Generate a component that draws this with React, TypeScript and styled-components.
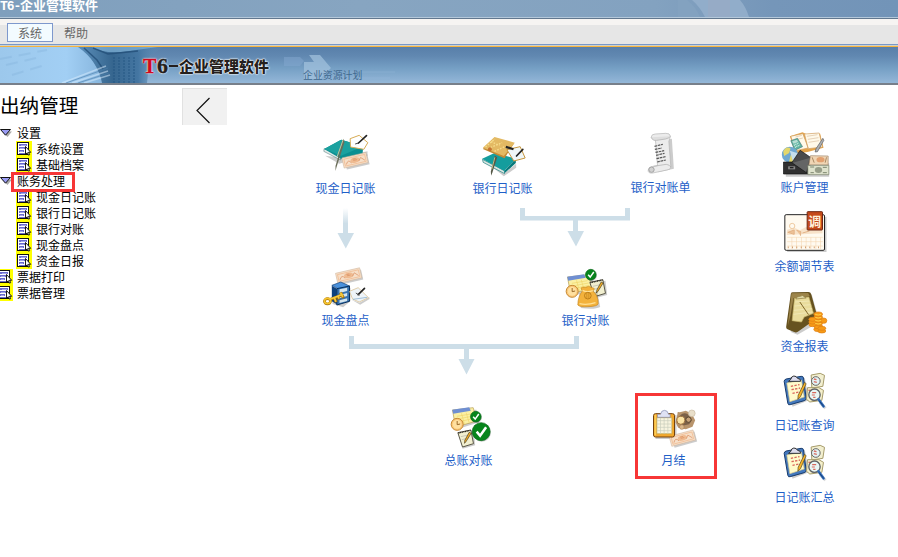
import React from 'react';
import styled, { createGlobalStyle, css } from 'styled-components';

const GlobalStyle = createGlobalStyle`
  * { box-sizing: border-box; }
  body {
    margin: 0;
    background: #fff;
    font-family: "Noto Sans CJK SC", "Liberation Sans", sans-serif;
    font-size: 12px;
    overflow: hidden;
  }
`;

const Page = styled.div`
  display: flex;
  flex-direction: column;
  width: 898px;
  height: 557px;
  overflow: hidden;
  background: #fff;
`;

const TitleBar = styled.header`
  position: relative;
  flex: none;
  height: 19px;
  overflow: hidden;
  background: linear-gradient(90deg, #7f9fbd 0, #87a5c1 40%, #83a2c0 73%, #7596b9 86%, #7294b8 100%);
  border-bottom: 1px solid #62788f;
  box-shadow: inset 0 -1px #b4c8da;
`;

const TitleText = styled.h1`
  position: relative;
  margin: -2px 0 0;
  font-family: "Noto Sans CJK SC", sans-serif;
  font-size: 13px;
  line-height: 14px;
  font-weight: 700;
  color: #fff;
  white-space: nowrap;
`;

const Latin = styled.span<{ $width: number }>`
  display: inline-block;
  width: ${(p) => p.$width}px;
  font-family: "Liberation Mono", monospace;
  letter-spacing: -1px;
`;

const TitleArt = styled.svg`
  position: absolute;
  top: 0;
  left: 678px;
`;

const MenuBar = styled.nav`
  display: flex;
  flex: none;
  align-items: flex-start;
  height: 28px;
  padding: 4px 7px 0;
  background: linear-gradient(#f6f4f2 0 6px, #e6e6e6 6px 25px, #7897c7 25px 26px, #ced1cb 26px 27px, #f7b33c 27px);
`;

const MenuItem = styled.button<{ $active?: boolean }>`
  width: 46px;
  height: 19px;
  padding: 0;
  border: 1px solid ${(p) => (p.$active ? '#7e98cd' : 'transparent')};
  background: ${(p) => (p.$active ? '#f3fbff' : 'transparent')};
  color: #666;
  font: 12px/17px "Noto Sans CJK SC", sans-serif;
`;

const Banner = styled.div`
  position: relative;
  flex: none;
  height: 38px;
  background: linear-gradient(#587fa9 0, #6188b1 25%, #76a0c5 60%, #94b7d8 100%);
  border-bottom: 2px solid #777f8a;
`;

const BannerArt = styled.svg`
  position: absolute;
  top: 0;
  left: 0;
`;

const BannerLogo = styled.div`
  position: absolute;
  left: 143px;
  top: 8px;
  display: flex;
  align-items: center;
  height: 22px;
  font-size: 15px;
  font-weight: 900;
  line-height: 22px;
  color: #251f1d;
  text-shadow: 0 0 1px #fff, 0 0 1px #fff, 0 0 2px #fff, 0 0 2px #dce8f2;
`;

const LogoLatin = styled.span<{ $red?: boolean }>`
  width: ${(p) => (p.$red ? 14 : 12)}px;
  font-family: "Liberation Serif", serif;
  font-size: ${(p) => (p.$red ? 20 : 22)}px;
  font-weight: 700;
  -webkit-text-stroke: .5px ${(p) => (p.$red ? '#cf0a20' : '#251f1d')};
  color: ${(p) => (p.$red ? '#cf0a20' : '#251f1d')};
`;

const LogoDash = styled.span`
  width: 9px;
  height: 2px;
  margin-right: 1px;
  background: #251f1d;
  box-shadow: 0 0 1px #fff;
`;

const BannerTag = styled.div`
  position: absolute;
  left: 303px;
  top: 21px;
  font-family: "Noto Sans CJK SC", sans-serif;
  font-size: 9.9px;
  line-height: 14px;
  color: #41698f;
`;

const Body = styled.div`
  display: flex;
  flex: 1;
  min-height: 0;
`;

const Sidebar = styled.aside`
  flex: none;
  width: 182px;
  padding-top: 6px;
`;

const SidebarTitle = styled.h2`
  margin: 0 0 6px;
  font-size: 19.6px;
  line-height: 28px;
  font-weight: 400;
  color: #000;
`;

const TreeRow = styled.div<{ $level: 'group' | 'child' | 'leaf' }>`
  position: relative;
  display: flex;
  align-items: center;
  height: 16px;
  color: #000;
  white-space: nowrap;
  ${(p) => p.$level === 'group' && css`gap: 5px;`}
  ${(p) => p.$level === 'child' && css`padding-left: 16px; gap: 4px;`}
  ${(p) => p.$level === 'leaf' && css`margin-left: -3px; gap: 4px;`}
`;

const TreeLabel = styled.span`
  font-size: 12px;
  line-height: 16px;
`;

const TreeMark = styled.span`
  position: absolute;
  z-index: 1;
  left: 11px;
  top: -1px;
  width: 64px;
  height: 20px;
  border: 3px solid #f73636;
`;

const Canvas = styled.main`
  position: relative;
  flex: 1;
  display: flex;
  justify-content: space-between;
`;

const BackButton = styled.button`
  width: 45px;
  height: 37px;
  margin-top: 3px;
  padding: 0;
  border: 0;
  background: #f1f1f1;
  box-shadow: inset 1px 1px #e1e1e1;
`;

const Connectors = styled.svg`
  position: absolute;
  left: 0;
  top: 0;
  pointer-events: none;
`;

const Node = styled.div`
  display: flex;
  flex-direction: column;
  align-items: center;
  width: 80px;
  height: 66px;
  color: #1f5fc8;
`;

const PlacedNode = styled(Node)<{ $x: number; $y: number }>`
  position: absolute;
  left: ${(p) => p.$x}px;
  top: ${(p) => p.$y}px;
`;

const NodeIcon = styled.svg`
  display: block;
  width: 52px;
  height: 48px;
  overflow: visible;
`;

const NodeLabel = styled.span`
  font-size: 12px;
  line-height: 18px;
  white-space: nowrap;
`;

const Highlight = styled.div`
  position: absolute;
  left: 453px;
  top: 308px;
  width: 82px;
  height: 86px;
  border: 3px solid #f73636;
`;

const ReportColumn = styled.section`
  display: grid;
  grid-template-rows: 79px 80px 79px 72px 66px;
  align-content: start;
  padding: 45px 53.5px 0 0;
`;

/* ---------- small drawings ---------- */

const Caret = () => (
  <svg width="12" height="10" viewBox="0 0 12 10">
    <path d="M2 3.5h10L7.5 9z" fill="#aaa" />
    <path d="M.5 1.5h10L5.500 7.200z" fill="#9a9cf5" stroke="#111" strokeWidth="1" />
  </svg>
);

const DocIcon = () => (
  <svg width="16" height="16" viewBox="0 0 16 16" shapeRendering="crispEdges">
    <path fill="#ff0" d="M0 0h16v16H0z" />
    <path fill="#111" d="M1 1h12v13H1z" />
    <path fill="#fff" d="M2 2h10v11H2z" />
    <path fill="#6a6ccc" d="M3 3h8v2H3zM3 6h6v2H3zM3 9h5v2H3zM3 12h6v1H3z" />
    <path fill="#a5a7ec" d="M5 4h5v1H5zM4 7h4v1H4zM4 10h3v1H4z" />
    <path shapeRendering="auto" fill="#fff" stroke="#000" strokeWidth=".9" d="M9.500 5.500v8l1.800-1.800 1.200 2.500 1.200-.6-1.200-2.300h2.200z" />
  </svg>
);

const shade = 'rgba(50,50,50,.25)';

const Tick = ({ cx, cy, r }: { cx: number; cy: number; r: number }) => (
  <g>
    <circle cx={cx + 2} cy={cy + 3} r={r} fill={shade} />
    <circle cx={cx} cy={cy} r={r} fill="#07851c" stroke="#056515" strokeWidth="2" />
    <path
      d={`M${cx - r * 0.5} ${cy}l${r * 0.38} ${r * 0.45}L${cx + r * 0.55} ${cy - r * 0.5}`}
      fill="none"
      stroke="#fff"
      strokeWidth={r * 0.28}
    />
  </g>
);

const Calendar = ({ x, y }: { x: number; y: number }) => (
  <g transform={`translate(${x} ${y})`}>
    <path d="M8 10L76 7l8 38-64 20z" fill={shade} />
    <path d="M4 8L66 1l12 40-65 18z" fill="#fbf0a4" stroke="#b2984d" strokeWidth="2" />
    <path d="M3 7L54 0l5 10L6 19z" fill="#6f8fd2" />
    <path d="M17 27l47-8M19 35l48-9M22 43l48-10M31 18l9 33M45 16l9 30" stroke="#efd568" strokeWidth="2" />
    <circle cx="18" cy="51" r="18" fill="#fbc878" stroke="#c78a35" strokeWidth="3" />
    <circle cx="18" cy="51" r="13" fill="#ffe0a0" />
    <path d="M18 41v11l9-2" fill="none" stroke="#9b6928" strokeWidth="3" />
  </g>
);

const Pad = ({ x, y }: { x: number; y: number }) => (
  <g transform={`translate(${x} ${y})`}>
    <path d="M6 10L47 3l5 43-38 10z" fill={shade} />
    <path d="M0 8L39 0l8 41-33 10z" fill="#f1efd0" stroke="#5b5848" strokeWidth="3" />
    <path d="M2 9L38 1" stroke="#26241e" strokeWidth="4" strokeDasharray="3 2" />
    <path d="M9 20l23-5M12 29l20-5" stroke="#b5b5aa" strokeWidth="2" />
    <path d="M40 10L25 34l-5 6 1-9L34 7z" fill="#f2ae28" stroke="#463920" strokeWidth="2" />
  </g>
);

const Note = ({ x, y, rotate = -10 }: { x: number; y: number; rotate?: number }) => (
  <g transform={`translate(${x} ${y}) rotate(${rotate})`}>
    <path d="M5 6h72v31H7z" fill={shade} />
    <path d="M0 0h74v31H0z" fill="#f6dfc8" stroke="#cdb197" strokeWidth="1.500" />
    <path d="M5 5h64v21H5z" fill="none" stroke="#f0b78c" strokeWidth="2" />
    <ellipse cx="37" cy="15" rx="14" ry="8" fill="#efbb91" />
    <path d="M9 22q8-16 16-1M48 20l7-9 11 11M32 15h11M31 11h9" fill="none" stroke="#da8f62" strokeWidth="2" />
  </g>
);

const CashJournal = () => (
  <NodeIcon viewBox="58.500 18 156 144">
    <path d="M74 92l42 24 85-24v-13l-90 18z" fill={shade} />
    <path d="M70 79l50 26v-14L71 71z" fill="#e4ebea" stroke="#6a8d8c" strokeWidth="2" />
    <path d="M71 72l51-28 66 20-2 26-62 13z" fill="#0c8f91" />
    <path d="M71 72l51-28 66 20-66 28z" fill="#1ba19f" />
    <path d="M149 41l27-10 26 22-12 20-40-7z" fill="#fff" stroke="#d7ac55" strokeWidth="3" />
    <path d="M174 54l24-22" stroke="#222" strokeWidth="5" strokeLinecap="round" />
    <path d="M174 54l-10 3" stroke="#444" strokeWidth="3" />
    <Note x={124} y={99} rotate={-13} />
    <path d="M129 41l3 11-24 75-3 11v-15z" fill="#6a6d58" />
    <path d="M128 44l-18 51" stroke="#c8c099" strokeWidth="3" />
  </NodeIcon>
);

const BankJournal = () => (
  <NodeIcon viewBox="49.500 18 156 144">
    <path d="M73 109l57 37 37-30v12l-37 26z" fill={shade} />
    <path d="M66 103l66 34v9L68 112z" fill="#d9e5e1" stroke="#167878" strokeWidth="2" />
    <path d="M65 101l37-17 64 17-35 37z" fill="#149d9d" />
    <path d="M132 137l34-36v13l-34 31z" fill="#087a7c" />
    <path d="M67 72l35-34 58 18-28 44z" fill="#c48b35" />
    <path d="M67 68l35-32 61 17-33 40z" fill="#e3b963" />
    <path d="M75 66l28-24M82 71l43-18M102 79l31-14M91 50l26 11" stroke="#f7dc8b" strokeWidth="4" strokeDasharray="5 4" />
    <circle cx="88" cy="73" r="6" fill="#c4722f" />
    <path d="M139 74l40-9 15 34-34 9z" fill="#eff6f7" stroke="#c6963e" strokeWidth="3" />
    <path d="M168 93l19-20" stroke="#222" strokeWidth="5" strokeLinecap="round" />
    <path d="M137 62l23 8-2 6-23-7z" fill="#232323" />
    <path d="M103 92l7 5-14 45-4 10-1-12z" fill="#565947" />
    <path d="M103 97l-9 35" stroke="#c3b987" strokeWidth="3" />
  </NodeIcon>
);

const Statement = () => (
  <NodeIcon viewBox="523.500 15 156 144">
    <path d="M596 48l38-7 6 90-48 11z" fill={shade} />
    <path d="M572 37q1-10 12-10l32-2q12-1 14 9l-5 15 6 77q-1 9-12 9l-42 9q-15 2-14-9 1-9 14-11l14-2-6-75z" fill="#ececec" stroke="#b4b4b4" strokeWidth="2" />
    <path d="M572 37q4 11 17 9l26-4q12-3 15-8" fill="#dedede" stroke="#aaa" strokeWidth="2" />
    <path d="M579 124l38-6q10 1 14 8" fill="none" stroke="#aaa" strokeWidth="2" />
    <circle cx="573" cy="134" r="8" fill="#d1d1d1" stroke="#a4a4a4" strokeWidth="3" />
    <path d="M582 64l25-6M583 73l21-4M585 82l26-5M587 91l25-6M588 101l27-6M590 111l26-6" stroke="#555" strokeWidth="3.500" strokeDasharray="8 2" />
  </NodeIcon>
);

const AccountAdmin = () => (
  <NodeIcon viewBox="55.500 30 156 144">
    <path d="M76 134l130-4v40H76z" fill={shade} />
    <path d="M88 49l38-12 11 5 42-1 10 42-48 13-36 5z" fill="#e4a44a" />
    <path d="M91 49l36-8 16 43-38 8zM132 42l44-3 10 42-43 5z" fill="#fff9e9" stroke="#cf9d60" strokeWidth="2" />
    <path d="M105 51l19-5M106 59l21-5M139 49l32-5M142 58l32-5M144 67l32-5" stroke="#d9bea0" strokeWidth="2" />
    <path d="M91 62l20-7 15 25-23 11z" fill="#5eb3a2" stroke="#4c7c79" strokeWidth="2" />
    <path d="M95 64l14-5 4 7-14 5z" fill="#b9ded4" />
    <path d="M100 76l15-7M103 82l15-7" stroke="#d9f1e8" strokeWidth="4" strokeDasharray="3 2" />
    <circle cx="88" cy="104" r="24" fill="#6fa9d2" />
    <path d="M68 95q8-18 22-10l-4 14-15 9zM91 104l15 4-8 18-14 5z" fill="#e3d76d" />
    <path d="M88 92l24 8-14 27z" fill="#c5dfed" />
    <path d="M69 126h80v36H69z" fill="#303030" stroke="#111" strokeWidth="2" />
    <path d="M83 139h21v9H83z" fill="#888" />
    <path d="M88 141h11v4H88z" fill="#222" />
    <path d="M119 91l34 23-15 44-44-30z" fill="#4a4b4c" stroke="#151515" strokeWidth="2" />
    <path d="M97 128l50-14-10 42z" fill="#777" opacity=".6" />
    <path d="M150 107l53 1v27h-58z" fill="#f0d5b4" stroke="#9e876c" strokeWidth="2" />
    <ellipse cx="180" cy="119" rx="12" ry="8" fill="#e2a070" />
    <path d="M155 112l6 16M198 112l-4 16" stroke="#a98a65" strokeWidth="3" />
    <path d="M142 136h63v28h-63z" fill="#dee2cc" stroke="#77806b" strokeWidth="2" />
    <ellipse cx="174" cy="150" rx="11" ry="9" fill="#979d88" />
    <path d="M149 141h12M150 158h10M187 142h12M187 158h12" stroke="#7d866f" strokeWidth="3" />
    <path d="M187 55l3 6-19 34-7 1 2-9z" fill="#adb0b3" stroke="#575b60" strokeWidth="2" />
  </NodeIcon>
);

const StampText = styled.text`
  font-family: "Noto Sans CJK SC", sans-serif;
  font-size: 39px;
  font-weight: 700;
  fill: #fff2dc;
`;

const Balance = () => (
  <NodeIcon viewBox="55.500 267 156 144">
    <path d="M80 290h118v106H80z" fill={shade} />
    <rect x="73" y="284" width="119" height="107" rx="4" fill="#fffaf0" stroke="#252525" strokeWidth="3" />
    <path d="M80 329l22-6 16 8 20-11 18 9 30-5v16l-107 5z" fill="#f8e3ca" />
    <path d="M82 337l19-7v13zM108 331l13 4-1 12M126 339l21-6" fill="#edc298" stroke="#e3b387" strokeWidth="3" />
    <path d="M80 352h107M80 365h107M80 378h107M94 352v35M108 352v35M123 352v35M137 352v35M151 352v35M166 352v35M180 352v35" stroke="#f3d2aa" strokeWidth="1.500" />
    <circle cx="95" cy="318" r="8" fill="none" stroke="#efcba2" strokeWidth="3" />
    <path d="M82 382h103" stroke="#bd773d" strokeWidth="5" strokeDasharray="2 11" />
    <rect x="140" y="275" width="46" height="55" rx="2" fill="#c54a1b" stroke="#6f2815" strokeWidth="3" />
    <StampText x="143.500" y="317">调</StampText>
  </NodeIcon>
);

const FundReport = () => (
  <NodeIcon viewBox="55.500 27 156 144">
    <path d="M95 48l59-4 23 82-66 38-20-8z" fill={shade} />
    <path d="M91 41q1-4 6-4l47-1q6 0 8 6l18 66q1 6-4 9l-54 38q-5 4-11 1l-20-8q-5-3-4-8z" fill="#66521f" />
    <path d="M93 40l50-1 5 10-49 5-9 53-8 30z" fill="#9c844a" />
    <path d="M102 55l43-4 14 49-28 11-8 15-28-4z" fill="#e9dc9c" stroke="#c7b569" strokeWidth="2" />
    <path d="M104 66l43-3M102 78l48-4M100 91l54-5M99 103l56-7" stroke="#f5edbf" strokeWidth="2" />
    <path d="M106 57q3-9 13-8 8-6 13 2l5 3z" fill="#dfd8a7" stroke="#8c7a40" strokeWidth="2" />
    <path d="M118 66l26 38" stroke="#806729" strokeWidth="3" />
    <g fill="#f79a16" stroke="#dc7f15" strokeWidth="2">
      {[0, 1, 2, 3, 4, 5].map((n) => <ellipse key={n} cx="173" cy={148 - n * 9} rx="13" ry="7" />)}
      {[0, 1, 2].map((n) => <ellipse key={n} cx="156" cy={134 - n * 8} rx="11" ry="6" />)}
      {[0, 1].map((n) => <ellipse key={n} cx="184" cy={153 - n * 8} rx="12" ry="6" />)}
      <ellipse cx="190" cy="122" rx="9" ry="8" />
    </g>
    <path d="M164 103q9 4 18 0M164 112q9 4 18 0M164 121q9 4 18 0M164 130q9 4 18 0" fill="none" stroke="#ffcf45" strokeWidth="3" />
  </NodeIcon>
);

const JournalQuery = () => (
  <NodeIcon viewBox="55.500 9 156 144">
    <path d="M80 50l53-11 12 67-49 19z" fill={shade} />
    <path d="M71 49q0-5 6-7l45-8q6-1 7 5l8 61q0 6-6 7l-42 12q-6 2-7-4z" fill="#4378bd" stroke="#183c6c" strokeWidth="3" />
    <path d="M79 54l44-8 8 50-43 14z" fill="#fffbcb" stroke="#d9c988" strokeWidth="2" />
    <path d="M84 49l7-6q1-9 9-10 8 0 11 7l8 3 1 6z" fill="#dde" stroke="#333" strokeWidth="3" />
    <path d="M91 64l26-5M93 74l26-5M96 85l20-4" stroke="#d9665a" strokeWidth="4" strokeDasharray="7 4" />
    <path d="M132 52l5 4-17 39-8 8 1-12z" fill="#f8b429" stroke="#4b421f" strokeWidth="2" />
    <path d="M152 30l27-5 13 6-5 33-33 5z" fill="#f2efd0" stroke="#a79c6b" strokeWidth="3" />
    <circle cx="166" cy="48" r="13" fill="#e4f3f4" stroke="#666" strokeWidth="3" />
    <path d="M160 42l8 2M160 50l9 2" stroke="#d86c62" strokeWidth="4" />
    <path d="M141 68l34 0 14 8-5 30-36 5-10-8z" fill="#f5f0cc" stroke="#a79c6b" strokeWidth="3" />
    <path d="M144 76h10" stroke="#db6a59" strokeWidth="4" />
    <path d="M178 112l17 18" stroke="#888" strokeWidth="9" opacity=".3" />
    <circle cx="162" cy="89" r="17" fill="#e8f6f5" stroke="#5c6064" strokeWidth="4" />
    <path d="M155 83h12M154 90h9M158 97h7" stroke="#d9685c" strokeWidth="3.500" />
    <path d="M174 103l15 21" stroke="#326eba" strokeWidth="8" strokeLinecap="round" />
    <path d="M176 107l14 18" stroke="#163e7a" strokeWidth="3" />
  </NodeIcon>
);

const CashCount = () => (
  <NodeIcon viewBox="28.500 9 156 144">
    <Note x={75} y={40} rotate={-13} />
    <path d="M66 80l32 15 22-12v40l-22 19-32-10z" fill={shade} />
    <path d="M64 76l27-10 26 12-26 13z" fill="#4a91dc" stroke="#143f75" strokeWidth="2" />
    <path d="M64 77l15 9v47l-15-9z" fill="#0d417e" />
    <path d="M79 86l38-8v46l-38 11z" fill="#3672b0" stroke="#07315f" strokeWidth="3" />
    <path d="M87 88l23-5v10l-23 6zM87 105l23-6v9l-23 7zM87 121l23-6v8l-23 6z" fill="#d4e5ee" />
    <ellipse cx="51" cy="124" rx="9" ry="8" fill="none" stroke="#9e6c09" strokeWidth="8" />
    <path d="M58 119l39-15M72 114l5 13M82 109l4 9M90 97l9 17" stroke="#a87309" strokeWidth="9" />
    <ellipse cx="51" cy="123" rx="9" ry="8" fill="none" stroke="#f6c32c" strokeWidth="5" />
    <path d="M58 118l39-15M72 114l4 11M83 110l3 6M90 98l7 13" stroke="#f6ca3e" strokeWidth="5" />
    <path d="M121 118l26 10 30-16v5l-28 17z" fill={shade} />
    <path d="M117 94l26-11 31 30-28 13-20-9z" fill="#eef4f9" stroke="#d3b680" strokeWidth="2" />
    <path d="M127 118l43-6" stroke="#78a5c8" strokeWidth="2" />
    <path d="M143 104l19-19" stroke="#222" strokeWidth="5" strokeLinecap="round" />
    <path d="M136 99l11 7" stroke="#555" strokeWidth="3" />
  </NodeIcon>
);

const BankCheck = () => (
  <NodeIcon viewBox="748.500 9 156 144">
    <Calendar x={767} y={43} />
    <Pad x={838} y={59} />
    <path d="M806 101l54-6 9 46q-17 9-58 3z" fill={shade} />
    <path d="M816 92q-12-12 9-10 9-6 20 1 11 1 2 10 17 14 16 38-1 8-31 9-24 2-30-5 0-25 14-43z" fill="#f3b23c" stroke="#c5861f" strokeWidth="2" />
    <path d="M816 91q14 7 31 1M807 131q22 5 48-3" fill="none" stroke="#ffe095" strokeWidth="4" />
    <circle cx="832" cy="107" r="10" fill="none" stroke="#bd7f1a" strokeWidth="3" />
    <path d="M829 98v18M835 98v18" stroke="#bd7f1a" strokeWidth="2" />
    <Tick cx={841} cy={44} r={16} />
  </NodeIcon>
);

const LedgerCheck = () => (
  <NodeIcon viewBox="37.500 54 156 144">
    <Calendar x={62} y={67} />
    <Pad x={82} y={135} />
    <Tick cx={136} cy={95} r={16} />
    <Tick cx={152} cy={140} r={27} />
  </NodeIcon>
);

const MonthClose = () => (
  <NodeIcon viewBox="652.500 54 156 144">
    <path d="M675 90h63v72h-63z" fill={shade} />
    <path d="M741 86q-2-8 7-4l18-5 18 9 10 20-8 19-20 8-23-5-8-16z" fill="#b8946c" />
    <path d="M748 92q12-12 24-4l12 18-8 12-20 4-12-12z" fill="#7c6148" />
    <circle cx="784" cy="85" r="10" fill="#e9dfca" stroke="#c8bba4" strokeWidth="2" />
    <circle cx="751" cy="106" r="12" fill="#fbe3a4" stroke="#a0743f" strokeWidth="3" />
    <circle cx="774" cy="104" r="8" fill="#c8a278" stroke="#594630" strokeWidth="3" />
    <circle cx="754" cy="126" r="7" fill="#d9b78c" stroke="#a98155" strokeWidth="2" />
    <Note x={716} y={154} rotate={-15} />
    <rect x="669" y="86" width="63" height="70" rx="6" fill="#f3a82c" stroke="#72410c" strokeWidth="3" />
    <path d="M674 89v62" stroke="#ffe06a" strokeWidth="3" />
    <path d="M679 98h45v48h-45z" fill="#f7f4df" stroke="#bba95b" strokeWidth="2" />
    <path d="M679 107h45M679 117h45M679 127h45M679 137h45M690 98v48M701 98v48M712 98v48" stroke="#c8cdbd" strokeWidth="2" />
    <path d="M681 97v-9h9q2-12 12-12 10 0 12 12h5v9z" fill="#dfe2f4" stroke="#8089ae" strokeWidth="2" />
  </NodeIcon>
);

/* ---------- data ---------- */

const tree: { label: string; level: 'group' | 'child' | 'leaf'; marked?: boolean }[] = [
  { label: '设置', level: 'group' },
  { label: '系统设置', level: 'child' },
  { label: '基础档案', level: 'child' },
  { label: '账务处理', level: 'group', marked: true },
  { label: '现金日记账', level: 'child' },
  { label: '银行日记账', level: 'child' },
  { label: '银行对账', level: 'child' },
  { label: '现金盘点', level: 'child' },
  { label: '资金日报', level: 'child' },
  { label: '票据打印', level: 'leaf' },
  { label: '票据管理', level: 'leaf' },
];

const flow = [
  { label: '现金日记账', x: 123.5, y: 46, Icon: CashJournal },
  { label: '银行日记账', x: 280.5, y: 46, Icon: BankJournal },
  { label: '银行对账单', x: 438.5, y: 45, Icon: Statement },
  { label: '现金盘点', x: 123.5, y: 178, Icon: CashCount },
  { label: '银行对账', x: 363.5, y: 178, Icon: BankCheck },
  { label: '总账对账', x: 246.5, y: 318, Icon: LedgerCheck },
  { label: '月结', x: 451.5, y: 318, Icon: MonthClose },
];

const reports = [
  { label: '账户管理', Icon: AccountAdmin },
  { label: '余额调节表', Icon: Balance },
  { label: '资金报表', Icon: FundReport },
  { label: '日记账查询', Icon: JournalQuery },
  { label: '日记账汇总', Icon: JournalQuery },
];

export default function App() {
  return (
    <Page>
      <GlobalStyle />
      <TitleBar>
        <TitleArt width="84" height="17" viewBox="0 0 84 17">
          <path d="M0 0h9q9 7 13 17H0z" fill="#83a2c0" />
          <path d="M14 0h48q6 7 9 17H27Q22 7 14 0z" fill="#91adca" />
          <path d="M30 0h22v17H30z" fill="#98a9c5" opacity=".7" />
        </TitleArt>
        <TitleText><Latin $width={20}>T6-</Latin>企业管理软件</TitleText>
      </TitleBar>
      <MenuBar>
        <MenuItem $active>系统</MenuItem>
        <MenuItem>帮助</MenuItem>
      </MenuBar>
      <Banner>
        <BannerArt width="420" height="36" viewBox="0 0 420 36">
          <defs>
            <linearGradient id="paper" x1="0" x2="1">
              <stop offset="0" stopColor="#9cc8ec" />
              <stop offset=".65" stopColor="#a2cff4" />
              <stop offset="1" stopColor="#86b5dd" />
            </linearGradient>
            <linearGradient id="machine" x1="0" x2="1">
              <stop offset="0" stopColor="#5d90bb" />
              <stop offset=".4" stopColor="#36668f" />
              <stop offset=".7" stopColor="#4476a2" />
              <stop offset="1" stopColor="#6896bd" stopOpacity="0" />
            </linearGradient>
          </defs>
          <path d="M0 0h80q16 12 22 36H0z" fill="url(#paper)" />
          <path d="M78 0h86l-14 8-3 28H102Q98 14 78 0z" fill="url(#machine)" />
          <path d="M92 0q14 8 37 4L158 0z" fill="#83b5d8" opacity=".7" />
          <path d="M84 1l13 12 6 9M93 1l15 6 30-3" stroke="#234f78" strokeWidth="1.500" fill="none" opacity=".8" />
          <path d="M114 10v26M119 10v26M124 10v26M129 10v26M134 10v26" stroke="#1f527f" strokeWidth="2" strokeDasharray="2 1" opacity=".4" />
          <path d="M0 12l47-9M6 18l30-7M12 28l36-11" stroke="#83b2db" strokeWidth="2" strokeDasharray="12 7" opacity=".35" />
          <path d="M62 36l44-17M72 36l36-12M84 36l26-8" stroke="#dcefff" strokeWidth="1.500" opacity=".5" />
          <path d="M66 36l42-15M78 36l31-10" stroke="#4d7ea9" strokeWidth="1" opacity=".6" />
          <path d="M284 10h16l4 4-4 5h-16z" fill="#84a8cf" opacity=".5" />
          <path d="M309 8h11l11 13-11 11H304V15h10z" fill="#a4c3de" opacity=".7" />
          <path d="M350 25h45M330 31h60" stroke="#98badb" opacity=".4" />
        </BannerArt>
        <BannerLogo>
          <LogoLatin $red>T</LogoLatin>
          <LogoLatin>6</LogoLatin>
          <LogoDash />
          企业管理软件
        </BannerLogo>
        <BannerTag>企业资源计划</BannerTag>
      </Banner>
      <Body>
        <Sidebar>
          <SidebarTitle>出纳管理</SidebarTitle>
          {tree.map((item) => (
            <TreeRow key={item.label} $level={item.level}>
              {item.level === 'group' ? <Caret /> : <DocIcon />}
              <TreeLabel>{item.label}</TreeLabel>
              {item.marked && <TreeMark />}
            </TreeRow>
          ))}
        </Sidebar>
        <Canvas>
          <BackButton aria-label="返回">
            <svg width="45" height="37" viewBox="0 0 45 37">
              <path d="M27.500 10L15 22.500l12.500 12.500" fill="none" stroke="#111" strokeWidth="1.200" />
            </svg>
          </BackButton>
          <Connectors width="520" height="300" viewBox="182 85 520 300" fill="#cddee8">
            <defs>
              <linearGradient id="fade" x1="0" x2="0" y1="0" y2="1">
                <stop offset="0" stopColor="#cddee8" stopOpacity="0" />
                <stop offset=".6" stopColor="#cddee8" />
              </linearGradient>
            </defs>
            <path d="M343 208h5v26h-5z" fill="url(#fade)" />
            <path d="M337.500 233h16.500l-8.200 15.500z" />
            <path d="M520 208h5v8h100v-8h5v12.500h-52V231h6l-8 15.500-8.500-15.500h5.500v-10.500h-53z" />
            <path d="M349 336h5v8h220v-8h5v13H469v10h5.500l-8 15.500-8-15.500h5.500v-10H349z" />
          </Connectors>
          {flow.map(({ label, x, y, Icon }) => (
            <PlacedNode key={label} $x={x} $y={y}>
              <Icon />
              <NodeLabel>{label}</NodeLabel>
            </PlacedNode>
          ))}
          <Highlight />
          <ReportColumn>
            {reports.map(({ label, Icon }) => (
              <Node key={label}>
                <Icon />
                <NodeLabel>{label}</NodeLabel>
              </Node>
            ))}
          </ReportColumn>
        </Canvas>
      </Body>
    </Page>
  );
}
